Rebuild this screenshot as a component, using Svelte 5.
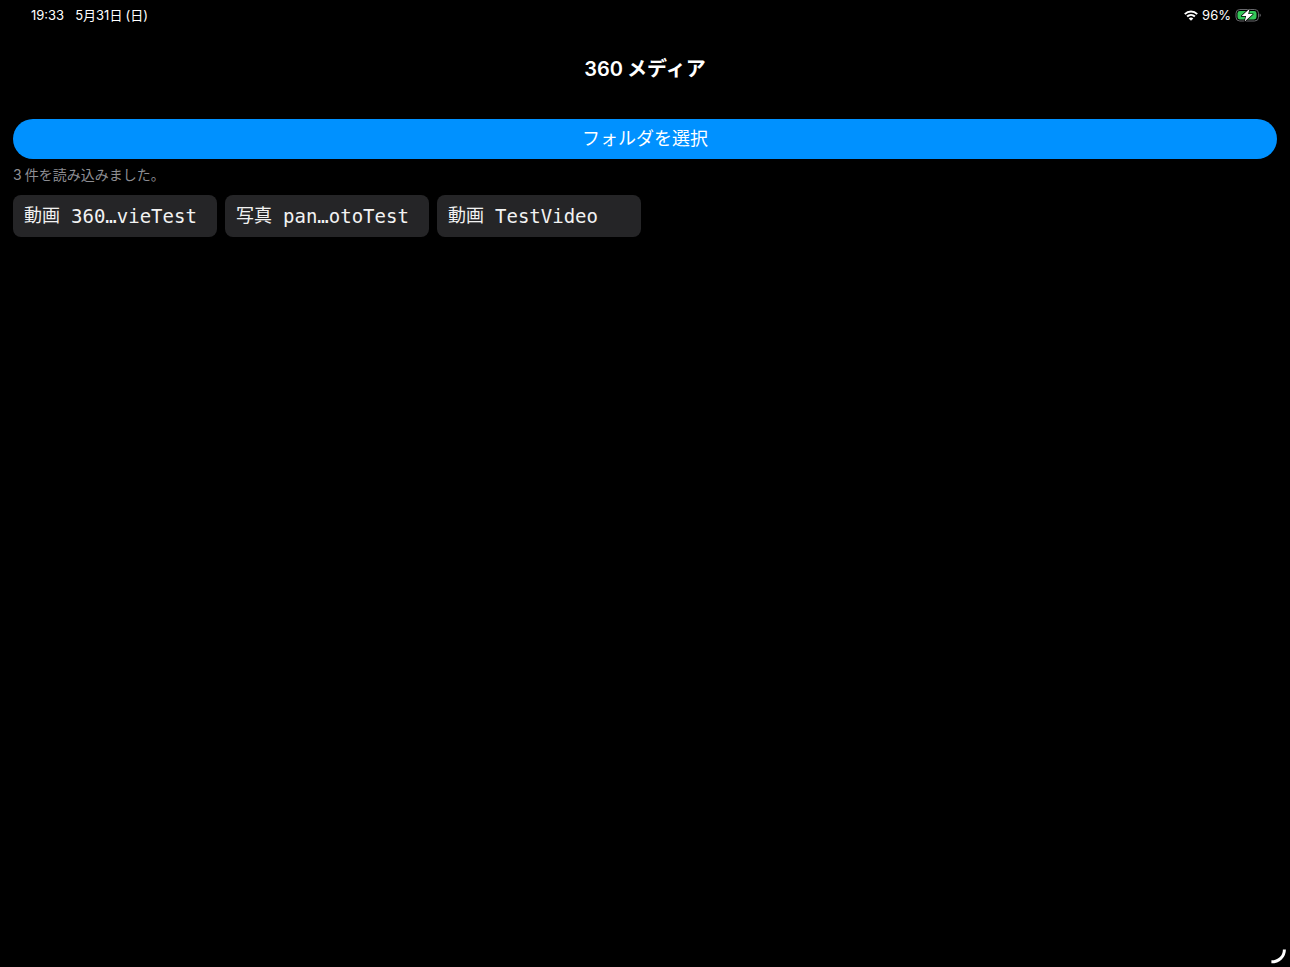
<script>
  const items = [
    { kind: '動画', name: '360…vieTest' },
    { kind: '写真', name: 'pan…otoTest' },
    { kind: '動画', name: 'TestVideo' }
  ];
</script>

<div class="screen">
  <div class="status">
    <div class="group left">
      <time>19:33</time>
      <span>5月31日<span class="day">(日)</span></span>
    </div>
    <div class="group">
      <svg class="wifi" width="14" height="11" viewBox="0 0 14 11" aria-hidden="true">
        <g fill="none" stroke="#fff" stroke-width="2">
          <path d="M.8 4.1C4.3.7 9.7.7 13.2 4.1" />
          <path d="M3.1 6.5c2.2-2.1 5.6-2.1 7.8 0" />
        </g>
        <path d="M7 10.7 4.7 8.5c1.3-1.2 3.3-1.2 4.6 0z" fill="#fff" />
      </svg>
      <span>96%</span>
      <svg class="battery" width="26" height="14" viewBox="0 0 26 14" aria-hidden="true">
        <rect x="1" y="1.5" width="22.5" height="11.5" rx="3.8" fill="none" stroke="#68686c" />
        <path d="M24.6 5.4c1.6.6 1.6 3 0 3.6z" fill="#68686c" />
        <rect x="2.5" y="3" width="19" height="8.5" rx="2.4" fill="#34c759" />
        <path d="M14.6.8 6.6 8.1h4.5L9.7 13.6l8.2-7.5h-4.7z" fill="#fff" stroke="#000" stroke-width="1.4" stroke-linejoin="round" paint-order="stroke" />
      </svg>
    </div>
  </div>

  <header><h1><span>360</span>メディア</h1></header>

  <main>
    <button class="select">フォルダを選択</button>
    <p><span>3</span>件を読み込みました。</p>
    <div class="grid">
      {#each items as item}
        <button class="item"><span class="kind">{item.kind}</span><span>{item.name}</span></button>
      {/each}
    </div>
  </main>

  <svg class="corner" width="16" height="16" viewBox="0 0 16 16" aria-hidden="true">
    <path d="M14.4 1.4C14.4 8.6 8.8 13.8 1.4 13.8" fill="none" stroke="#fff" stroke-width="3" />
  </svg>
</div>

<style>
  :global(body) {
    margin: 0;
    background: #000;
  }
  .screen {
    min-height: 100vh;
    background: #000;
    color: #fff;
    font-family: Inter, "Noto Sans CJK JP", sans-serif;
  }
  .status {
    display: flex;
    justify-content: space-between;
    height: 30px;
    padding: 0 29px 0 31px;
    font-size: 13px;
    line-height: 16px;
  }
  .group {
    display: flex;
    align-items: center;
    gap: 4px;
  }
  .left {
    gap: 11px;
  }
  .day {
    margin-left: 3px;
  }
  header {
    display: flex;
    align-items: center;
    justify-content: center;
    height: 78px;
  }
  h1 {
    margin: 0;
    font-size: 20px;
    line-height: 24px;
    font-weight: 600;
  }
  h1 span {
    margin-right: 4px;
  }
  main {
    padding: 11px 13px;
  }
  button {
    border: 0;
    color: #fff;
    font-family: inherit;
    cursor: pointer;
  }
  .select {
    display: block;
    width: 100%;
    height: 40px;
    border-radius: 20px;
    background: #0091ff;
    font-size: 18px;
    line-height: 24px;
  }
  p {
    margin: 6px 0 10px;
    color: #8e8e93;
    font-size: 14px;
    line-height: 20px;
  }
  p span {
    margin-right: 3px;
  }
  .grid {
    display: grid;
    grid-template-columns: repeat(6, 1fr);
    gap: 8px;
  }
  .item {
    display: flex;
    align-items: center;
    gap: 11px;
    padding: 9px 11px;
    border-radius: 8px;
    background: #252527;
    color: #f2f2f2;
    font-family: "DejaVu Sans Mono", "Noto Sans CJK JP", monospace;
    font-size: 19px;
    line-height: 24px;
    white-space: nowrap;
  }
  .kind {
    font-size: 18px;
  }
  .corner {
    position: fixed;
    right: 4px;
    bottom: 3px;
  }
</style>
